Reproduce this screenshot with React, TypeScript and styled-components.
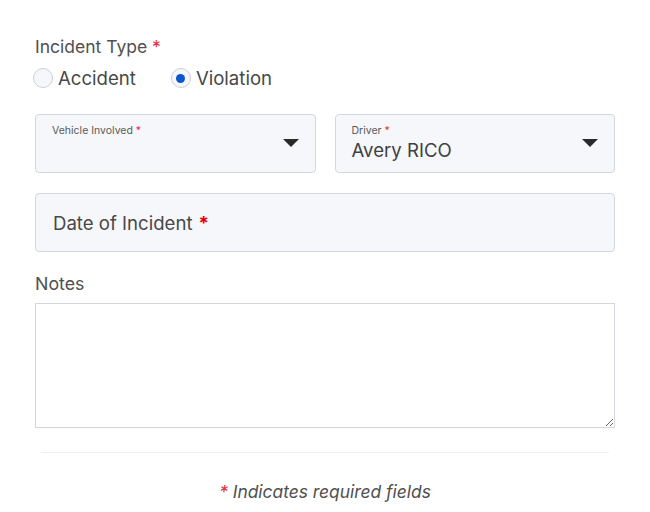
import { createGlobalStyle, styled } from "styled-components";

const GlobalStyle = createGlobalStyle`
  body {
    margin: 0;
    background: #ffffff;
    font-family: Inter, "Noto Sans", sans-serif;
    color: #4a4a4a;
  }
`;

const App = () => {
  return (
    <>
      <GlobalStyle />
      <Form>
        <FieldLabel>
          Incident Type <Star>*</Star>
        </FieldLabel>
        <RadioRow>
          <RadioOption>
            <RadioCircle />
            Accident
          </RadioOption>
          <RadioOption>
            <RadioCircle checked />
            Violation
          </RadioOption>
        </RadioRow>

        <SelectRow>
          <SelectBox>
            <SelectText>
              <SmallLabel>
                Vehicle Involved <Star>*</Star>
              </SmallLabel>
              <SelectValue />
            </SelectText>
            <Arrow />
          </SelectBox>
          <SelectBox>
            <SelectText>
              <SmallLabel>
                Driver <Star>*</Star>
              </SmallLabel>
              <SelectValue>Avery RICO</SelectValue>
            </SelectText>
            <Arrow />
          </SelectBox>
        </SelectRow>

        <DateBox>
          Date of Incident <BoldStar>*</BoldStar>
        </DateBox>

        <NotesLabel>Notes</NotesLabel>
        <Notes />

        <Divider />
        <Footer>
          <Star>*</Star> Indicates required fields
        </Footer>
      </Form>
    </>
  );
};

export default App;

const Form = styled.div`
  padding: 36px 35px 0 35px;
  display: flex;
  flex-direction: column;
`;

const FieldLabel = styled.div`
  font-size: 17.5px;
  line-height: 22px;
  color: #505050;
`;

const Star = styled.span`
  color: #e0303a;
`;

const BoldStar = styled.span`
  color: #e00000;
  font-weight: 700;
`;

const RadioRow = styled.div`
  display: flex;
  gap: 35px;
  margin-top: 8px;
  margin-left: -2px;
`;

const RadioOption = styled.label`
  display: flex;
  align-items: center;
  gap: 5px;
  font-size: 18.6px;
  line-height: 24px;
  color: #484848;
`;

const RadioCircle = styled.span<{ checked?: boolean }>`
  width: 20px;
  height: 20px;
  box-sizing: border-box;
  border-radius: 50%;
  border: 1px solid #c9cfdc;
  background: #f6f7fb;
  display: flex;
  align-items: center;
  justify-content: center;
  &::after {
    content: "";
    width: 9px;
    height: 9px;
    border-radius: 50%;
    background: ${(p) => (p.checked ? "#0a55d0" : "transparent")};
  }
`;

const SelectRow = styled.div`
  display: grid;
  grid-template-columns: 1fr 1fr;
  gap: 19px;
  margin-top: 24px;
`;

const SelectBox = styled.div`
  height: 59px;
  box-sizing: border-box;
  border: 1px solid #d2d7e2;
  border-radius: 4px;
  background: #f6f7fb;
  display: flex;
  align-items: flex-start;
  padding: 0 16px;
`;

const SelectText = styled.div`
  flex: 1;
  display: flex;
  flex-direction: column;
  padding-top: 9px;
`;

const SmallLabel = styled.div`
  font-size: 10.5px;
  line-height: 14px;
  color: #5a5a5a;
`;

const SelectValue = styled.div`
  font-size: 18.6px;
  line-height: 24px;
  min-height: 24px;
  color: #404040;
`;

const Arrow = styled.span`
  width: 0;
  height: 0;
  margin-top: 24px;
  border-left: 8px solid transparent;
  border-right: 8px solid transparent;
  border-top: 8px solid #2a2a2a;
`;

const DateBox = styled.div`
  margin-top: 20px;
  height: 59px;
  box-sizing: border-box;
  border: 1px solid #d2d7e2;
  border-radius: 4px;
  background: #f6f7fb;
  display: flex;
  align-items: center;
  gap: 6px;
  padding-left: 17px;
  font-size: 18.6px;
  color: #484848;
`;

const NotesLabel = styled.div`
  margin-top: 21px;
  font-size: 17.8px;
  line-height: 22px;
  color: #505050;
`;

const Notes = styled.textarea`
  margin-top: 8px;
  height: 125px;
  box-sizing: border-box;
  border: 1px solid #d2d7e2;
  border-radius: 0;
  background: #fff;
  font-family: inherit;
  outline: none;
`;

const Divider = styled.div`
  margin: 24px 6px 0 6px;
  height: 1px;
  background: #f0f1f4;
`;

const Footer = styled.div`
  margin-top: 28px;
  text-align: center;
  font-size: 17.4px;
  font-style: italic;
  color: #505050;
`;
